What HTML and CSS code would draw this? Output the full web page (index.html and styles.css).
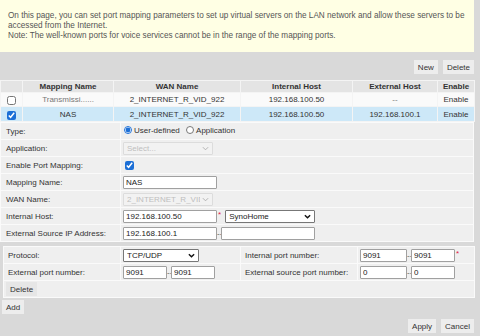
FILE: index.html
```html
<!DOCTYPE html>
<html lang="en">
<head>
    <meta charset="UTF-8">
    <title>Port Mapping</title>
    <link rel="stylesheet" href="styles.css">
</head>
<body>
<div class="page">
    <div class="intro">
        On this page, you can set port mapping parameters to set up virtual servers on the LAN network and allow these servers to be accessed from the Internet.<br>
        Note: The well-known ports for voice services cannot be in the range of the mapping ports.
    </div>

    <div class="toolbar">
        <button class="btn">New</button>
        <button class="btn">Delete</button>
    </div>

    <table class="list">
        <colgroup>
            <col style="width:22px"><col style="width:91px"><col style="width:127px">
            <col style="width:112px"><col style="width:85px"><col style="width:37px">
        </colgroup>
        <tr class="head">
            <th></th><th>Mapping Name</th><th>WAN Name</th><th>Internal Host</th><th>External Host</th><th>Enable</th>
        </tr>
        <tr>
            <td><input type="checkbox"></td><td class="muted">Transmissi......</td><td>2_INTERNET_R_VID_922</td><td>192.168.100.50</td><td class="muted">--</td><td>Enable</td>
        </tr>
        <tr class="selected">
            <td><input type="checkbox" checked></td><td>NAS</td><td>2_INTERNET_R_VID_922</td><td>192.168.100.50</td><td>192.168.100.1</td><td>Enable</td>
        </tr>
    </table>

    <table class="form">
        <tr>
            <td class="label">Type:</td>
            <td>
                <label class="radio"><input type="radio" name="type" checked>User-defined</label>
                <label class="radio"><input type="radio" name="type">Application</label>
            </td>
        </tr>
        <tr>
            <td class="label">Application:</td>
            <td>
                <span class="select disabled w90"><select disabled><option>Select...</option></select>
                    <svg viewBox="0 0 8 5"><path d="M1 1 L4 4 L7 1" /></svg></span>
            </td>
        </tr>
        <tr>
            <td class="label">Enable Port Mapping:</td>
            <td><input type="checkbox" class="check" checked></td>
        </tr>
        <tr>
            <td class="label">Mapping Name:</td>
            <td><input type="text" class="field w94" value="NAS"></td>
        </tr>
        <tr>
            <td class="label">WAN Name:</td>
            <td>
                <span class="select disabled w90"><select disabled><option>2_INTERNET_R_VID_922</option></select>
                    <svg viewBox="0 0 8 5"><path d="M1 1 L4 4 L7 1" /></svg></span>
            </td>
        </tr>
        <tr>
            <td class="label">Internal Host:</td>
            <td>
                <input type="text" class="field w94" value="192.168.100.50"><span class="req">*</span>
                <span class="select w90"><select><option>SynoHome</option></select>
                    <svg viewBox="0 0 8 5"><path d="M1 1 L4 4 L7 1" /></svg></span>
            </td>
        </tr>
        <tr>
            <td class="label">External Source IP Address:</td>
            <td><input type="text" class="field w94" value="192.168.100.1"><span class="dash">--</span><input type="text" class="field w94" value=""></td>
        </tr>
    </table>

    <div class="ports">
        <table class="form">
            <colgroup>
                <col style="width:117px"><col style="width:120px"><col style="width:117px"><col style="width:117px">
            </colgroup>
            <tr>
                <td class="label">Protocol:</td>
                <td>
                    <span class="select w76"><select><option>TCP/UDP</option></select>
                        <svg viewBox="0 0 8 5"><path d="M1 1 L4 4 L7 1" /></svg></span>
                </td>
                <td class="label">Internal port number:</td>
                <td><input type="text" class="field w46" value="9091"><span class="dash">--</span><input type="text" class="field w44" value="9091"><span class="req">*</span></td>
            </tr>
            <tr>
                <td class="label">External port number:</td>
                <td><input type="text" class="field w44" value="9091"><span class="dash">--</span><input type="text" class="field w44" value="9091"></td>
                <td class="label">External source port number:</td>
                <td><input type="text" class="field w46" value="0"><span class="dash">--</span><input type="text" class="field w44" value="0"></td>
            </tr>
            <tr class="plain">
                <td colspan="4"><button class="btn">Delete</button></td>
            </tr>
        </table>
    </div>

    <div class="add">
        <button class="btn">Add</button>
    </div>

    <div class="actions">
        <button class="btn">Apply</button>
        <button class="btn">Cancel</button>
    </div>
</div>
</body>
</html>
```

FILE: styles.css
```css
body {
    margin: 0;
    background-color: #d9d9d9;
    font-family: "Liberation Sans", Arial, sans-serif;
    font-size: 8px;
    color: #333;
}

.page {
    width: 474px;
}

.intro {
    background-color: #ffffe4;
    height: 41px;
    padding: 11px 2px 0 8px;
    line-height: 10px;
    font-size: 8.2px;
    color: #555;
}

.toolbar,
.actions {
    display: flex;
    justify-content: flex-end;
    gap: 5px;
    padding: 8px 0 6px 0;
}

.actions {
    padding: 5px 0 0 0;
}

.btn {
    background-color: #ededed;
    border: none;
    border-radius: 0;
    height: 14px;
    padding: 0 4px;
    font-family: inherit;
    font-size: 8px;
    color: #333;
}

.list {
    width: 474px;
    border-collapse: collapse;
    table-layout: fixed;
}

.list th,
.list td {
    border: 1px solid #f4f4f4;
    padding: 0;
    text-align: center;
    white-space: nowrap;
    overflow: hidden;
}

.list .head th {
    height: 11px;
    background-color: #e4e4e4;
    color: #333;
    font-weight: bold;
}

.list td {
    height: 13px;
    background-color: #fafafa;
}

.list .selected td {
    height: 14px;
    background-color: #cde8f8;
}

.list .muted {
    color: #777;
}

.list input[type="checkbox"] {
    width: 9px;
    height: 9px;
    margin: 2px 0 0 0;
    accent-color: #1c6fd6;
    vertical-align: top;
}

.form {
    width: 100%;
    border-collapse: collapse;
    table-layout: fixed;
}

.form td {
    height: 16px;
    padding: 0 0 0 2px;
    background-color: #efefef;
    border: 1px solid #fafafa;
    white-space: nowrap;
    vertical-align: middle;
}

.page > .form td.label {
    width: 114px;
    padding-left: 5px;
}

.form .label {
    padding-left: 4px;
    color: #333;
}

.radio {
    display: inline-flex;
    align-items: center;
    margin-right: 3px;
}

.radio input {
    width: 8px;
    height: 8px;
    margin: 0 2px 0 1px;
    accent-color: #1c6fd6;
}

.check {
    width: 9px;
    height: 9px;
    margin: 0 0 0 2px;
    accent-color: #1c6fd6;
    vertical-align: middle;
}

.field {
    box-sizing: border-box;
    height: 13px;
    border: 1px solid #a0a0a0;
    border-radius: 1px;
    padding: 0 2px;
    font-family: inherit;
    font-size: 8px;
    color: #222;
    background-color: #fff;
    vertical-align: middle;
}

.w94 { width: 94px; }
.w90 { width: 90px; }
.w76 { width: 76px; }
.w46 { width: 47px; }
.w44 { width: 44px; }

.select {
    position: relative;
    display: inline-block;
    height: 13px;
    vertical-align: middle;
}

.select select {
    appearance: none;
    box-sizing: border-box;
    width: 100%;
    height: 13px;
    border: 1px solid #777;
    border-radius: 1px;
    padding: 0 12px 0 3px;
    font-family: inherit;
    font-size: 8px;
    color: #222;
    background-color: #fff;
}

.select svg {
    position: absolute;
    right: 4px;
    top: 4px;
    width: 7px;
    height: 5px;
    fill: none;
    stroke: #111;
    stroke-width: 1.6;
}

.select.disabled select {
    border-color: #d4d4d4;
    color: #aaa;
    background-color: #f4f4f4;
}

.select.disabled svg {
    stroke: #aaa;
    stroke-width: 1;
}

.req {
    color: #e0204a;
    display: inline-block;
    width: 5px;
    padding-left: 1px;
    vertical-align: top;
}

.dash {
    display: inline-block;
    width: 4px;
    overflow: hidden;
    color: #555;
    vertical-align: middle;
}

.ports {
    margin: 4px 0 0 3px;
    width: 471px;
}

.ports .form td {
    height: 16px;
}

.ports .plain td {
    height: 16px;
    padding-left: 2px;
}

.ports .plain .btn {
    background-color: #e6e6e6;
    height: 14px;
}

.add {
    padding: 2px 0 0 2px;
}
```
